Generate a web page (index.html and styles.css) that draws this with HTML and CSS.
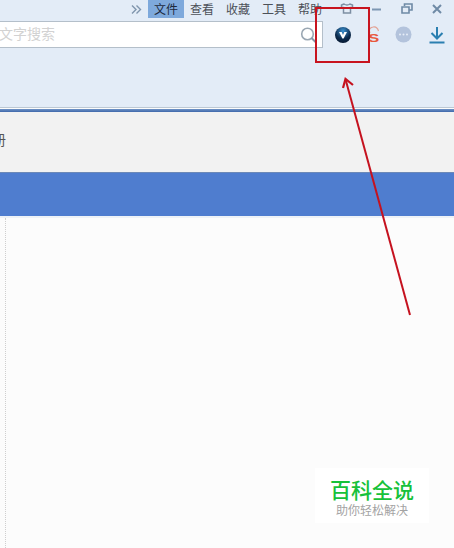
FILE: index.html
```html
<!DOCTYPE html>
<html lang="zh-CN">
<head>
    <meta charset="UTF-8">
    <meta name="viewport" content="width=device-width, initial-scale=1.0">
    <title>百科全说</title>
    <link rel="stylesheet" href="styles.css">
</head>
<body>
    <div class="page">
        <div class="toolbar">
            <div class="menu-row">
                <span class="more">
                    <svg width="11" height="11" viewBox="0 0 11 11"><path d="M1 1.500 L5 5.500 L1 9.500 M5.500 1.500 L9.500 5.500 L5.500 9.500" fill="none" stroke="#7f95ad" stroke-width="1.400"/></svg>
                </span>
                <span class="menu-item active">文件</span>
                <span class="menu-item">查看</span>
                <span class="menu-item">收藏</span>
                <span class="menu-item">工具</span>
                <span class="menu-item">帮助</span>
                <span class="win-btn">
                    <svg width="16" height="14" viewBox="0 0 16 14"><path d="M5 2 L2.500 3 V5.500 H4.500 V11 H11.500 V5.500 H13.500 V3 L11 2 Q8 4 5 2 Z" fill="none" stroke="#7d8ea3" stroke-width="1.500"/></svg>
                </span>
                <span class="win-btn">
                    <svg width="12" height="12" viewBox="0 0 12 12"><path d="M1 6.500 H10" stroke="#7d97b3" stroke-width="2"/></svg>
                </span>
                <span class="win-btn">
                    <svg width="12" height="12" viewBox="0 0 12 12"><path d="M3.500 3 V1 H11 V7 H8.500 M1 4 H8 V10 H1 Z" fill="none" stroke="#6f8aa6" stroke-width="1.600"/></svg>
                </span>
                <span class="win-btn">
                    <svg width="12" height="12" viewBox="0 0 12 12"><path d="M2 2 L10 10 M10 2 L2 10" stroke="#6f8aa6" stroke-width="2"/></svg>
                </span>
            </div>
            <div class="search-row">
                <div class="search-box">
                    <span class="placeholder">文字搜索</span>
                    <svg class="search-icon" width="18" height="18" viewBox="0 0 18 18"><circle cx="7.500" cy="8" r="5.800" fill="none" stroke="#9aa7b3" stroke-width="1.600"/><path d="M11.500 12 L15.500 16" stroke="#8596a8" stroke-width="2"/></svg>
                </div>
                <span class="tool tool-v">
                    <svg width="18" height="18" viewBox="0 0 18 18"><defs><radialGradient id="ball" cx="50%" cy="25%" r="75%"><stop offset="0" stop-color="#3a90d0"/><stop offset="0.650" stop-color="#0c2a4c"/><stop offset="1" stop-color="#071a33"/></radialGradient></defs><circle cx="9" cy="9" r="8" fill="url(#ball)"/><path d="M5 6 H7.700 L9 9 L10.300 6 H13 L9.600 12.500 H8.400 Z" fill="#fff"/></svg>
                </span>
                <span class="tool tool-s">
                    <svg class="steam" width="12" height="8" viewBox="0 0 12 8"><path d="M2 8 Q0 3 5 2 Q9 1 10.500 6" fill="none" stroke="#e3a294" stroke-width="1.200"/></svg>
                    <span class="s-letter">S</span>
                </span>
                <span class="tool tool-dots">
                    <svg width="17" height="17" viewBox="0 0 17 17"><circle cx="8.500" cy="8.500" r="8" fill="#b3c3dc"/><circle cx="5" cy="8.500" r="1" fill="#e6edf7"/><circle cx="8.500" cy="8.500" r="1" fill="#e6edf7"/><circle cx="12" cy="8.500" r="1" fill="#e6edf7"/></svg>
                </span>
                <span class="tool tool-down">
                    <svg width="18" height="18" viewBox="0 0 18 18"><path d="M9 1 V12 M3.500 7 L9 12.500 L14.500 7" fill="none" stroke="#2a7fb0" stroke-width="2"/><path d="M1.500 16.500 H16.500" stroke="#2a7fb0" stroke-width="2"/></svg>
                </span>
            </div>
        </div>
        <div class="blue-line"></div>
        <div class="tab-row"><span class="tab-text">册</span></div>
        <div class="blue-bar"></div>
        <div class="content">
            <div class="dotted"></div>
            <div class="watermark">
                <div class="wm-title">百科全说</div>
                <div class="wm-sub">助你轻松解决</div>
            </div>
        </div>

        <div class="red-box"></div>
        <svg class="arrow" width="80" height="250" viewBox="0 0 80 250">
            <path d="M68 239 L4 5" fill="none" stroke="#c5121f" stroke-width="2"/>
            <path d="M1 12 L3.500 3 L11 9" fill="none" stroke="#c5121f" stroke-width="2.200"/>
        </svg>
    </div>
</body>
</html>
```

FILE: styles.css
```css
* {
    box-sizing: border-box;
}

html, body {
    margin: 0;
    padding: 0;
}

body {
    font-family: "Noto Sans CJK SC", "Noto Sans", sans-serif;
    background: #fcfcfc;
}

.page {
    position: relative;
    width: 454px;
    height: 548px;
    overflow: hidden;
    display: flex;
    flex-direction: column;
}

.toolbar {
    height: 108px;
    flex: none;
    background: #e3ecf7;
    border-bottom: 1px solid #bcc8d4;
}

.menu-row {
    height: 21px;
    padding-right: 2px;
    display: flex;
    justify-content: flex-end;
    align-items: flex-start;
}

.more {
    width: 16px;
    height: 18px;
    margin-right: 2px;
    display: flex;
    align-items: center;
    padding-left: 1px;
}

.menu-item {
    width: 36px;
    height: 18px;
    font-size: 12px;
    line-height: 18px;
    text-align: center;
    color: #4c5058;
}

.menu-item.active {
    background: #7ea9dc;
    color: #1d2a3c;
}

.win-btn {
    width: 30px;
    height: 18px;
    display: flex;
    justify-content: center;
    align-items: center;
}

.menu-item + .win-btn {
    margin-left: 4px;
}

.search-row {
    height: 27px;
    display: flex;
    align-items: center;
}

.search-box {
    width: 323px;
    height: 27px;
    display: flex;
    align-items: center;
    justify-content: space-between;
    padding-right: 4px;
    background: #fff;
    border: 1px solid #b4bfca;
    border-left: none;
}

.placeholder {
    margin-left: -1px;
    margin-top: -3px;
    font-size: 14px;
    color: #d2d2d2;
}

.tool {
    position: relative;
    width: 30px;
    height: 27px;
    display: flex;
    justify-content: center;
    align-items: center;
}

.tool-v {
    margin-left: 5px;
}

.tool-s {
    margin-left: 1px;
}

.tool-dots {
    margin-left: -1px;
}

.tool-down {
    margin-left: 4px;
}

.steam {
    position: absolute;
    top: 4px;
    left: 9px;
}

.s-letter {
    margin-top: 7px;
    font-family: "Liberation Sans", sans-serif;
    font-size: 11px;
    font-weight: bold;
    color: #e8593c;
    transform: scaleX(1.5);
}

.blue-line {
    height: 3px;
    flex: none;
    margin-top: 1px;
    background: linear-gradient(to bottom, #6f93c6, #3f68ab);
}

.tab-row {
    height: 60px;
    flex: none;
    display: flex;
    align-items: center;
    padding-bottom: 6px;
    background: #f2f2f2;
}

.tab-text {
    margin-left: -8px;
    font-size: 14px;
    color: #555;
}

.blue-bar {
    height: 44px;
    flex: none;
    background: #4f7dcf;
    border-top: 1px solid #6c89b8;
}

.content {
    flex: 1;
    position: relative;
    background: #fcfcfc;
    border-top: 2px solid #eef2f7;
}

.dotted {
    width: 6px;
    height: 100%;
    border-right: 1px dotted #cfcfcf;
}

.watermark {
    position: absolute;
    left: 315px;
    top: 250px;
    width: 114px;
    height: 55px;
    padding-top: 9px;
    background: #fff;
    text-align: center;
}

.wm-title {
    font-size: 21px;
    line-height: 24px;
    font-weight: 500;
    color: #17c13a;
}

.wm-sub {
    margin-top: 1px;
    font-size: 12px;
    line-height: 16px;
    color: #a3a3a3;
}

.red-box {
    position: absolute;
    left: 315px;
    top: 7px;
    width: 55px;
    height: 56px;
    border: 2px solid #c8141f;
}

.arrow {
    position: absolute;
    left: 342px;
    top: 76px;
}
```
